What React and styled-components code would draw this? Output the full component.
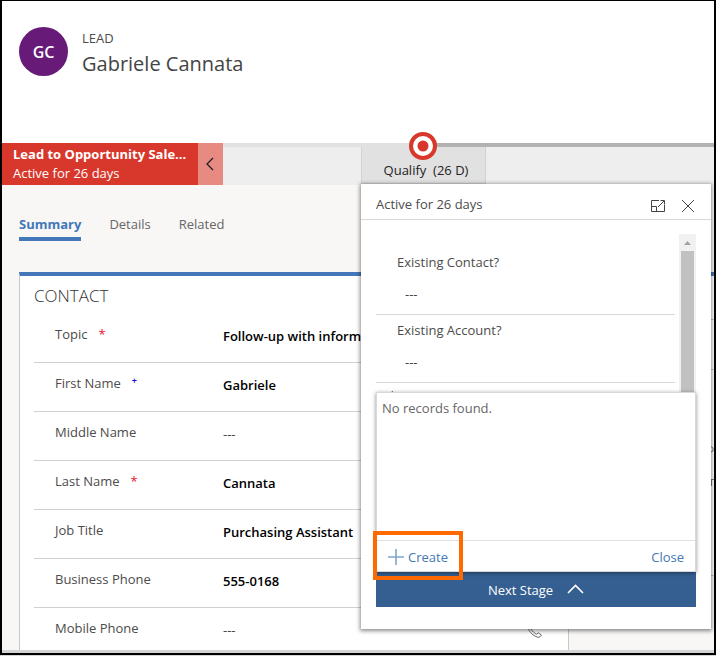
import React, { useId } from "react";
import styled, { createGlobalStyle, css } from "styled-components";

const Global = createGlobalStyle`
  *, *::before, *::after { box-sizing: border-box; }
  body { margin: 0; background: #fff; }
  body, button, input {
    font-family: "Open Sans", "Noto Sans", sans-serif;
    font-size: 13px;
    line-height: 18px;
    color: #4d4b4b;
  }
  button { border: 0; padding: 0; background: none; cursor: pointer; }
`;

const Frame = styled.div`
  min-height: 100vh;
  border-bottom: 1px solid #d6d6d6;
  display: flex;
`;

const Page = styled.main`
  flex: 1;
  min-width: 0;
  display: flex;
  flex-direction: column;
  border: solid #000;
  border-width: 1px 2px 2px;
  background: #f8f7f5;
  overflow: hidden;
`;

const RecordHeader = styled.header`
  display: flex;
  gap: 14px;
  height: 142px;
  padding: 26px 17px 0;
  background: #fff;
`;

const Avatar = styled.div`
  width: 49px;
  height: 49px;
  border-radius: 50%;
  display: grid;
  place-items: center;
  background: #671a77;
  color: #fff;
  font-size: 16px;
  font-weight: 600;
`;

const Entity = styled.div`
  padding-top: 2px;
`;

const RecordTitle = styled.h1`
  margin: 3px 0 0;
  font-size: 20px;
  line-height: 28px;
  font-weight: 400;
  color: #444;
`;

const Process = styled.section`
  display: flex;
  height: 42px;
  background: #eee;
`;

const ProcessName = styled.div`
  width: 196px;
  padding: 2px 11px;
  background: #d8382c;
  color: #fff;
  line-height: 19px;
`;

const ProcessTitle = styled.div`
  font-weight: 700;
  white-space: nowrap;
`;

const CollapseButton = styled.button`
  width: 25px;
  display: grid;
  place-items: center;
  background: #e78a82;
`;

const Track = styled.div`
  flex: 1;
  min-width: 0;
  display: flex;
  padding-left: 138px;
  background: linear-gradient(to right, #e1e1e1 200px, #b2b2b2 200px) top / 100% 4px no-repeat;
`;

const Stage = styled.div`
  position: relative;
  width: 125px;
  height: 41px;
`;

const StageButton = styled.button`
  width: 100%;
  height: 37px;
  margin-top: 4px;
  padding: 9px 0 0 5px;
  border: solid #d2d2d2;
  border-width: 0 1px 1px;
  background: #e1e1e1;
  color: #222;
  white-space: pre;
`;

const StageMarker = styled.svg`
  position: absolute;
  top: -11px;
  left: 48px;
`;

const Flyout = styled.section`
  position: absolute;
  z-index: 2;
  top: 100%;
  left: 0;
  width: 350px;
  height: 445px;
  background: #fff;
  box-shadow: 0 1px 4px 1px rgba(0, 0, 0, 0.45);
`;

const FlyoutHeader = styled.header`
  display: flex;
  align-items: center;
  height: 36px;
  padding: 4px 15px 0;
  border-bottom: 1px solid #d8d8d8;
`;

const FlyoutTitle = styled.h2`
  flex: 1;
  margin: 0;
  font-size: 13px;
  line-height: 18px;
  font-weight: 400;
`;

const IconButton = styled.button`
  display: grid;
  place-items: center;
  width: 16px;
  height: 16px;
  margin: 4px 0 0 14px;
`;

const FlyoutBody = styled.div`
  position: relative;
  height: 352px;
  padding: 14px 15px 0;
  display: flex;
`;

const FlyoutFields = styled.div`
  flex: 1;
  padding-right: 4px;
`;

const LookupField = styled.div`
  height: 68px;
  padding: 6px 21px 0;
  border-bottom: 1px solid #d8d8d8;

  &:first-child { height: 81px; padding-top: 19px; }
`;

const LookupLabel = styled.label`
  display: block;
`;

const valueText = css`
  width: 100%;
  padding: 0;
  border: 0;
  outline: 0;
  background: none;
  &::placeholder { color: #444; opacity: 1; }
`;

const LookupInput = styled.input`
  ${valueText}
  display: block;
  margin-top: 14px;
  padding-left: 8px;
`;

const NextField = styled.svg`
  display: block;
  margin: 7px 0 0 13px;
`;

const Scrollbar = styled.div`
  width: 17px;
  height: 200px;
  display: flex;
  flex-direction: column;
  align-items: center;
  background: #f1f1f1;
`;

const ScrollArrow = styled.svg`
  flex: none;
`;

const ScrollThumb = styled.div`
  width: 13px;
  flex: 1;
  background: #c1c1c1;
`;

const Dropdown = styled.div`
  position: absolute;
  top: 172px;
  left: 15px;
  right: 15px;
  height: 180px;
  display: flex;
  flex-direction: column;
  background: #fff;
  border: 1px solid #d8d8d8;
  box-shadow: 0 1px 4px rgba(0, 0, 0, 0.45);
`;

const Empty = styled.p`
  flex: 1;
  margin: 0;
  padding: 6px 5px;
  color: #666;
`;

const DropdownFooter = styled.footer`
  display: flex;
  justify-content: space-between;
  align-items: center;
  height: 31px;
  padding: 2px 11px 0;
  border-top: 1px solid #e0e0e0;
`;

const LinkButton = styled.button`
  position: relative;
  display: flex;
  align-items: center;
  gap: 4px;
  color: #4377b4;
`;

const Highlight = styled.span`
  position: absolute;
  z-index: 1;
  inset: -17px -15px -14px -15px;
  border: 4px solid #ff6a00;
  pointer-events: none;
`;

const NextStage = styled.button`
  display: flex;
  align-items: center;
  justify-content: center;
  gap: 14px;
  width: 320px;
  height: 35px;
  margin: 0 15px;
  background: #355f91;
  color: #fff;
  font-weight: 500;
`;

const Tabs = styled.nav`
  display: flex;
  gap: 28px;
  padding: 30px 17px 31px;
`;

const Tab = styled.a`
  padding-bottom: 4px;
  border-bottom: 4px solid ${(p) => (p.$active ? "#4377b9" : "transparent")};
  color: ${(p) => (p.$active ? "#4377b9" : "#666")};
  font-weight: ${(p) => (p.$active ? 700 : 400)};
  text-decoration: none;
`;

const Sections = styled.div`
  flex: 1;
  display: grid;
  grid-template-columns: minmax(0, 550fr) minmax(0, 124fr);
  gap: 21px;
  padding-left: 17px;
  border-bottom: 3px solid #d5d5d5;
`;

const Card = styled.section`
  border: solid #c8c8c8;
  border-width: 4px 1px 0;
  border-top-color: #4377b9;
  background: #fff;
  padding: 10px 14px 0;
`;

const SideCard = styled(Card)`
  height: 304px;
  border-bottom-width: 1px;
  border-right-width: 0;
  padding: 0;
`;

const SideRow = styled.div`
  height: ${(p) => p.$height}px;
  border-bottom: 1px solid #c8c8c8;
`;

const SideMarks = styled.svg`
  display: block;
  margin: 75px 0 0 auto;
`;

const CardTitle = styled.h2`
  margin: 0;
  font-size: 17px;
  line-height: 20px;
  font-weight: 300;
  color: #333;
`;

const Row = styled.div`
  display: flex;
  height: 49px;
  padding: 11px 0 0 21px;
  border-bottom: 1px solid #d0d0d0;

  &:first-of-type { margin-top: 8px; }
  &:last-child { border-bottom: 0; height: 42px; }
`;

const RowLabel = styled.label`
  width: 168px;
  flex: none;
`;

const Mark = styled.span`
  margin-left: 11px;
  color: ${(p) => (p.$kind === "+" ? "#1500e0" : "#e8112d")};
  font-size: ${(p) => (p.$kind === "+" ? 9 : 13)}px;
  font-weight: ${(p) => (p.$kind === "+" ? 600 : 400)};
  vertical-align: ${(p) => (p.$kind === "+" ? "4px" : "baseline")};
  line-height: 12px;
`;

const RowInput = styled.input`
  ${valueText}
  height: 18px;
  margin-top: 2px;
  color: #000;
  font-weight: 600;
  &::placeholder { font-weight: 400; }
`;

const PhoneIcon = styled.svg`
  flex: none;
  margin: 5px 11px 0 0;
`;

const fields = [
  { label: "Topic", mark: "*", value: "Follow-up with information" },
  { label: "First Name", mark: "+", value: "Gabriele" },
  { label: "Middle Name", value: "" },
  { label: "Last Name", mark: "*", value: "Cannata" },
  { label: "Job Title", value: "Purchasing Assistant" },
  { label: "Business Phone", value: "555-0168" },
  { label: "Mobile Phone", value: "", phone: true },
];

function FormRow({ label, mark, value, phone }) {
  const id = useId();
  return (
    <Row>
      <RowLabel htmlFor={id}>
        {label}
        {mark && <Mark $kind={mark}>{mark}</Mark>}
      </RowLabel>
      <RowInput id={id} defaultValue={value} placeholder="---" />
      {phone && (
        <PhoneIcon width="16" height="14" viewBox="0 0 16 14" fill="none" stroke="#666">
          <path d="M3.600 1 1.500 2.200C.6 5 3 8.400 6 10.800 8.800 13 12 13.800 13 12.800L14.500 11.200 11.300 8.800 9.600 10.200C7.800 9.600 5 7 4.200 5.200L5.400 3.700Z" />
        </PhoneIcon>
      )}
    </Row>
  );
}

function Lookup({ label }) {
  const id = useId();
  return (
    <LookupField>
      <LookupLabel htmlFor={id}>{label}</LookupLabel>
      <LookupInput id={id} placeholder="---" />
    </LookupField>
  );
}

function StageFlyout() {
  return (
    <Flyout>
      <FlyoutHeader>
        <FlyoutTitle>Active for 26 days</FlyoutTitle>
        <IconButton aria-label="Dock">
          <svg width="16" height="14" viewBox="0 0 16 14" fill="none" stroke="#444">
            <path d="M9 1.500H1.500V12.500H14.500V6M1.500 7.500H6.500V12.500M8 8 14 2M10.500 1.500H14.500V5.500" />
          </svg>
        </IconButton>
        <IconButton aria-label="Close flyout">
          <svg width="14" height="14" viewBox="0 0 14 14" stroke="#444">
            <path d="M1 1 13 13M13 1 1 13" />
          </svg>
        </IconButton>
      </FlyoutHeader>
      <FlyoutBody>
        <FlyoutFields>
          <Lookup label="Existing Contact?" />
          <Lookup label="Existing Account?" />
          <NextField width="8" height="4" stroke="#3f8f3a">
            <path d="M1 3.500 4 1" />
          </NextField>
        </FlyoutFields>
        <Scrollbar>
          <ScrollArrow width="17" height="17">
            <path d="M5 11 8.500 7 12 11Z" fill="#a3a3a3" />
          </ScrollArrow>
          <ScrollThumb />
        </Scrollbar>
        <Dropdown>
          <Empty>No records found.</Empty>
          <DropdownFooter>
            <LinkButton>
              <svg width="16" height="16" viewBox="0 0 16 16" stroke="#7fa3cf" strokeWidth="1.600">
                <path d="M8 0V16M0 8H16" />
              </svg>
              Create
              <Highlight />
            </LinkButton>
            <LinkButton>Close</LinkButton>
          </DropdownFooter>
        </Dropdown>
      </FlyoutBody>
      <NextStage>
        Next Stage
        <svg width="17" height="12" viewBox="0 0 17 12" fill="none" stroke="#fff" strokeWidth="1.600">
          <path d="M1 9 8.500 1.500 16 9" />
        </svg>
      </NextStage>
    </Flyout>
  );
}

export default function App() {
  return (
    <Frame>
      <Global />
      <Page>
        <RecordHeader>
          <Avatar>GC</Avatar>
          <Entity>
            LEAD
            <RecordTitle>Gabriele Cannata</RecordTitle>
          </Entity>
        </RecordHeader>
        <Process>
          <ProcessName>
            <ProcessTitle>Lead to Opportunity Sale...</ProcessTitle>
            Active for 26 days
          </ProcessName>
          <CollapseButton aria-label="Collapse">
            <svg width="9" height="14" viewBox="0 0 9 14" fill="none" stroke="#222" strokeWidth="1.300">
              <path d="M7 1 1 7 7 13" />
            </svg>
          </CollapseButton>
          <Track>
            <Stage>
              <StageButton>{"Qualify  (26 D)"}</StageButton>
              <StageMarker width="28" height="28" viewBox="0 0 28 28">
                <circle cx="14" cy="14" r="12" fill="#fff" stroke="#d8382c" strokeWidth="4" />
                <circle cx="14" cy="14" r="5.500" fill="#d8382c" />
              </StageMarker>
              <StageFlyout />
            </Stage>
          </Track>
        </Process>
        <Tabs>
          <Tab href="#summary" $active>Summary</Tab>
          <Tab href="#details">Details</Tab>
          <Tab href="#related">Related</Tab>
        </Tabs>
        <Sections>
          <Card>
            <CardTitle>CONTACT</CardTitle>
            {fields.map((f) => <FormRow key={f.label} {...f} />)}
          </Card>
          <SideCard>
            <SideRow $height={44} />
            <SideRow $height={50} />
            <SideMarks width="3" height="42" fill="none" stroke="#777">
              <path d="M0 1.500 2 3V6L0 7M.5 34V41M1 34.500H3" />
            </SideMarks>
          </SideCard>
        </Sections>
      </Page>
    </Frame>
  );
}
